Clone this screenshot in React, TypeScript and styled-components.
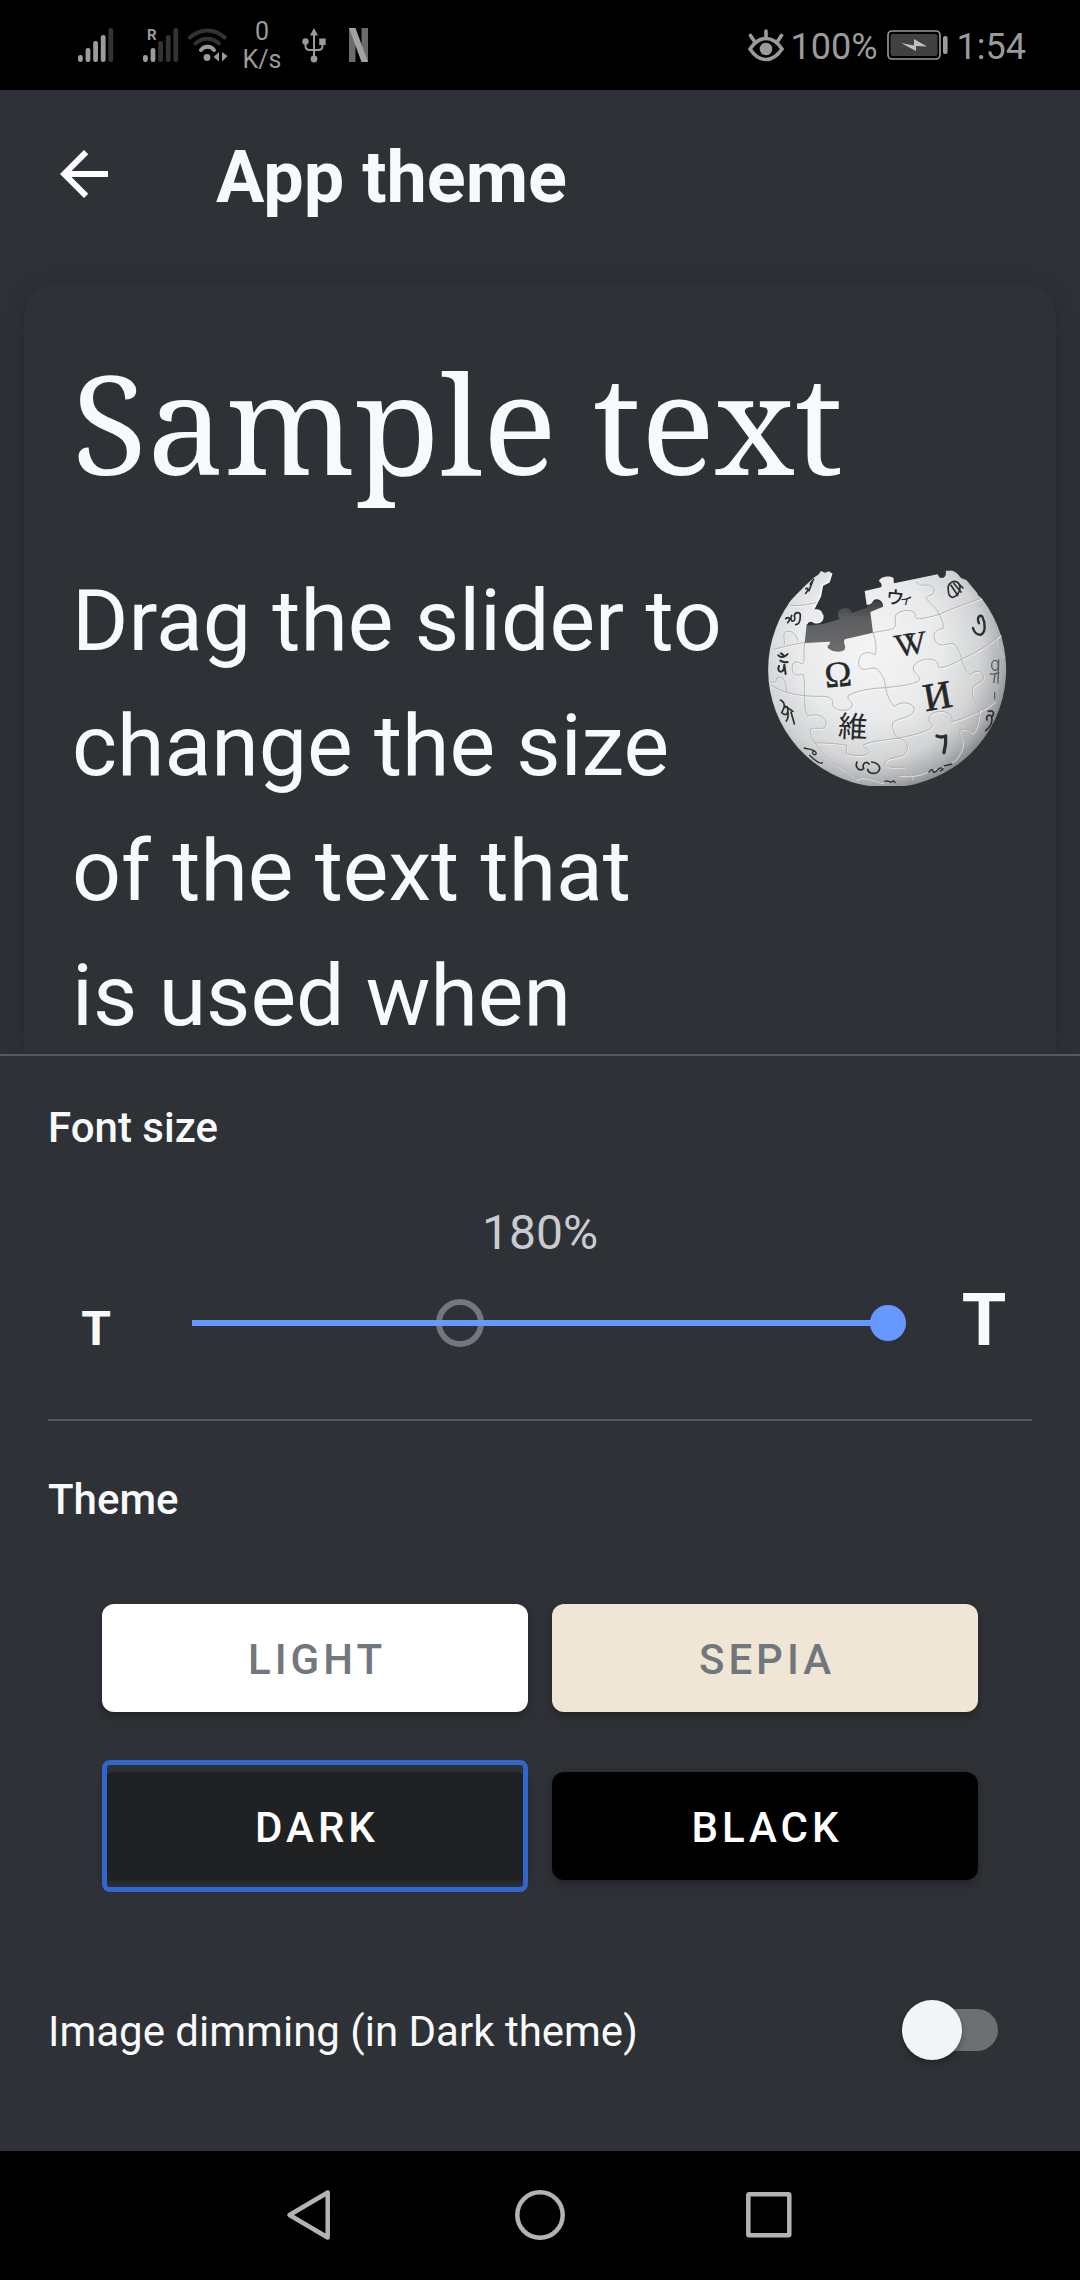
import React, { useState } from "react";
import styled, { createGlobalStyle, css } from "styled-components";

const color = {
  page: "#2e3136",
  text: "#f8f9fa",
  muted: "#c8ccd1",
  line: "#54595d",
  grey: "#72777d",
  blue: "#6699ff",
  selected: "#3366cc",
  status: "#9b9b9b",
  statusDim: "#333333",
};

const GlobalStyle = createGlobalStyle`
  *, *::before, *::after { box-sizing: border-box; }
  body { margin: 0; background: ${color.page}; }
  button { border: 0; margin: 0; padding: 0; background: none; font: inherit; color: inherit; }
`;

const Screen = styled.div`
  display: flex;
  flex-direction: column;
  height: 100vh;
  background: ${color.page};
  color: ${color.text};
  font-family: Roboto, "Noto Sans", sans-serif;
  > * { flex-shrink: 0; }
  svg { display: block; flex: none; }
`;

/* ---------- status bar ---------- */

const StatusBar = styled.header`
  display: flex;
  align-items: center;
  justify-content: space-between;
  height: 90px;
  padding: 0 54px 0 78px;
  background: #000;
  color: ${color.status};
`;

const StatusGroup = styled.div<{ $gap: number }>`
  display: flex;
  align-items: center;
  gap: ${(p) => p.$gap}px;
`;

const Speed = styled.div`
  width: 40px;
  padding-top: 2px;
  font-size: 25px;
  line-height: 28px;
  text-align: center;
  white-space: nowrap;
`;

const StatusText = styled.span`
  font-size: 36px;
  line-height: 42px;
  padding-top: 4px;
`;

function SignalIcon({ level, roaming }: { level: number; roaming?: boolean }) {
  return (
    <svg width="36" height="50" viewBox="0 -8 36 50" aria-hidden="true">
      {[7, 14, 21, 27, 34].map((h, i) => (
        <rect
          key={i}
          x={i * 7.6}
          y={34 - h}
          width="4.8"
          height={h}
          rx="2.2"
          fill={i < level ? color.status : color.statusDim}
        />
      ))}
      {roaming && (
        <text x="4" y="12" fontSize="15" fontWeight="700" fill={color.status} fontFamily="Roboto, sans-serif">
          R
        </text>
      )}
    </svg>
  );
}

function WifiIcon() {
  return (
    <svg width="40" height="34" viewBox="0 0 40 34" fill="none" strokeWidth="4" strokeLinecap="round" aria-hidden="true">
      <path d="M2 9.5C12 0 27 0 36.5 9.5" stroke={color.statusDim} />
      <path d="M7.5 15.5C15 9 24 9 31 15.5" stroke={color.statusDim} />
      <path d="M13 22C16 17.5 23 17.5 26 22" stroke={color.status} />
      <circle cx="19" cy="29.5" r="3.4" fill={color.status} />
      <path d="M31 24V33.5L25.5 29zM34 24V33.5L39.500 28z" fill={color.status} />
    </svg>
  );
}

function UsbIcon() {
  return (
    <svg width="24" height="35" viewBox="0 0 24 35" fill="none" stroke={color.status} strokeWidth="2" aria-hidden="true">
      <path d="M12 5V31M3.5 14V18Q3.5 22 8 22H16Q20.5 22 20.5 18V14" />
      <path d="M12 0L16 7.500H8z" fill={color.status} stroke="none" />
      <circle cx="3.5" cy="13.5" r="3.2" fill={color.status} stroke="none" />
      <rect x="17.2" y="10.5" width="6.5" height="6.5" fill={color.status} stroke="none" />
      <circle cx="12" cy="31" r="3.4" fill={color.status} stroke="none" />
    </svg>
  );
}

function StreamingLogo() {
  return (
    <svg width="19" height="34" viewBox="0 0 19 34" aria-hidden="true">
      <rect width="6.5" height="34" fill="#6b6b6b" />
      <rect x="12.5" width="6.5" height="34" fill="#6b6b6b" />
      <path d="M0 0H6.5L19 34H12.500z" fill="#a3a3a3" />
    </svg>
  );
}

function EyeIcon() {
  return (
    <svg width="36" height="33" viewBox="0 0 36 33" fill="none" stroke={color.status} strokeWidth="3.6" strokeLinecap="round" aria-hidden="true">
      <path d="M2 20Q9 9.5 18 9.5T34 20Q27 30.5 18 30.5T2 20z" />
      <circle cx="18" cy="20" r="6.3" fill={color.status} stroke="none" />
      <path d="M18 2V8M2.5 6.5L6.5 12.5M33.5 6.5L29.5 12.5" />
    </svg>
  );
}

function BatteryIcon() {
  return (
    <svg width="61" height="30" viewBox="0 0 61 30" aria-hidden="true">
      <rect x="1" y="1" width="52" height="28" rx="4" fill="none" stroke={color.status} strokeWidth="1.6" />
      <rect x="3.5" y="4" width="47" height="22" rx="2" fill="#414141" />
      <path d="M14 13L27 15.5V9L40 16.5L29 16L29 21z" fill="#c0c0c0" />
      <rect x="56" y="6" width="4.6" height="18" rx="2" fill={color.status} />
    </svg>
  );
}

/* ---------- toolbar ---------- */

const Toolbar = styled.div`
  display: flex;
  align-items: center;
  height: 168px;
  padding: 0 48px;
  gap: 96px;
`;

const BackButton = styled.button`
  display: block;
`;

const Title = styled.h1`
  margin: 0;
  padding-top: 8px;
  font-size: 72px;
  line-height: 84px;
  font-weight: 700;
`;

/* ---------- preview ---------- */

const Preview = styled.main`
  && {
    display: flex;
    flex: 1 1 0;
    min-height: 0;
    padding: 24px 24px 0;
    overflow: hidden;
  }
`;

const Card = styled.article`
  flex: 1;
  padding: 55px 48px 0;
  border-radius: 36px 36px 0 0;
  background: ${color.page};
  box-shadow: 0 6px 24px rgba(0, 0, 0, 0.22);
`;

const SampleTitle = styled.h2`
  margin: 0;
  font-family: "Noto Serif", "DejaVu Serif Condensed", "DejaVu Serif", serif;
  font-size: 138px;
  line-height: 168px;
  font-weight: 400;
  white-space: nowrap;
`;

const SampleBody = styled.div`
  display: flex;
  justify-content: space-between;
  margin-top: 53px;
`;

const SampleText = styled.p`
  margin: 0;
  font-size: 86px;
  line-height: 125px;
  white-space: nowrap;
`;

const GlobeFrame = styled.div`
  padding-top: 12px;
`;

function Globe() {
  const seams = [
    "M165 280C160 325 168 338 157 345C135 328 125 345 128 360C132 385 150 375 160 375C168 400 163 420 165 440C165 475 168 490 174 500C205 490 228 502 230 525C225 548 195 530 182 540C178 570 230 622 250 642C280 660 300 668 320 690",
    "M370 250C380 280 382 300 376 317C350 300 325 315 327 345C335 375 365 350 380 358C405 380 405 400 408 415C412 440 420 455 434 472C455 452 492 460 494 480C492 510 430 505 428 525C430 550 438 555 441 567C475 568 482 600 462 618C435 628 405 625 405 645C415 660 450 650 465 655C485 670 485 680 488 688",
    "M66 408C100 432 150 442 220 441C245 442 252 452 248 466C252 486 300 490 308 470C308 455 288 450 297 438C330 420 380 416 408 415C450 410 490 407 508 394C515 375 485 375 492 350C510 325 560 322 565 345C560 365 600 350 635 330C680 310 720 285 752 258",
    "M370 250C400 244 425 242 433 236C445 222 430 208 440 195C460 178 495 180 497 197C492 212 510 212 570 195C620 172 660 160 694 147",
    "M500 98C512 112 525 106 540 108C560 118 558 135 540 138C520 148 532 148 560 180C575 205 584 225 580 238C555 240 545 258 560 280C580 298 600 275 615 285C627 300 635 318 635 330C643 352 650 370 662 377C680 358 702 365 702 385C700 402 670 400 668 422C668 450 685 468 690 482",
    "M735 456C720 475 650 505 607 518C610 500 595 485 570 486C535 490 530 515 548 526C552 545 480 560 441 567C410 572 370 574 342 586C340 597 360 600 358 610C350 624 310 618 290 614L291 588C250 580 220 582 195 580",
    "M690 482C688 520 680 545 668 552C645 530 625 540 632 560C645 580 640 600 620 628C600 645 570 655 540 662C510 680 480 680 450 678",
    "M104 286C106 268 98 255 108 248C125 240 140 255 145 275M72 300C90 296 130 284 165 280",
    "M64 398C85 405 78 388 84 384C105 380 108 402 112 428M118 167C140 172 180 165 200 160",
    "M752 258C725 265 745 290 760 322M320 690C345 675 370 694 400 700",
  ];
  return (
    <svg width="240" height="216" viewBox="55 62 720 648" role="img" aria-label="Wikipedia globe">
      <defs>
        <radialGradient id="ball" gradientUnits="userSpaceOnUse" cx="360" cy="300" r="430">
          <stop offset="0" stopColor="#f5f5f6" />
          <stop offset="0.5" stopColor="#e9eaeb" />
          <stop offset="0.78" stopColor="#d2d3d4" />
          <stop offset="0.93" stopColor="#adaeb0" />
          <stop offset="1" stopColor="#8c8e90" />
        </radialGradient>
        <linearGradient id="hollow" x1="0" y1="0" x2="0" y2="1">
          <stop offset="0" stopColor="#3f4042" />
          <stop offset="0.35" stopColor="#5d5e60" />
          <stop offset="1" stopColor="#6c6d6f" />
        </linearGradient>
      </defs>
      <path
        d="M165 230L220 224L270 210C258 190 270 176 288 176C304 178 306 186 306 191L350 176C370 150 395 150 402 168L380 255L285 275C295 300 280 312 262 312C240 312 228 298 238 282L160 284z"
        fill="url(#hollow)"
      />
      <path
        d="M246 72L238 66L226 70L214 65L206 76C190 84 160 115 134 142C114 160 114 172 106 180A357 353 0 1 0 697 148C690 140 685 140 682 130L650 92L634 86C625 72 610 62 600 64L588 64C592 82 580 90 569 84L564 75L433 102C430 92 436 86 426 83C408 78 388 86 388 96C396 102 398 108 394 114L345 125L351 166C370 168 366 154 378 150C392 148 402 160 400 172L362 188L370 250L285 270C278 282 292 290 284 302C270 312 240 306 234 294C232 285 245 286 240 277L165 281L171 225C175 212 185 214 195 220C215 224 222 210 219 196C218 182 204 178 191 181L212 140L218 108L238 98z"
        fill="url(#ball)"
      />
      <path d="M246 72L238 98L218 108L212 140L191 181" fill="none" stroke="#fafafa" strokeWidth="5" />
      <path d="M171 225C175 212 185 214 195 220C215 224 222 210 219 196" fill="none" stroke="#fafafa" strokeWidth="4" />
      <g fill="none" strokeLinecap="round">
        {seams.map((d) => (
          <path key={d} d={d} transform="translate(2 3)" stroke="#fbfbfb" strokeWidth="2" />
        ))}
        {seams.map((d) => (
          <path key={d} d={d} stroke="#a9abad" strokeWidth="2.5" />
        ))}
      </g>
      <g fill="#262728" fontFamily='"Liberation Serif", "Noto Sans CJK JP", serif' textAnchor="middle">
        <text transform="translate(268 412) rotate(-5)" fontSize="110" stroke="#262728" strokeWidth="1">Ω</text>
        <text transform="translate(472 318) rotate(-8)" fontSize="96" stroke="#262728" strokeWidth="1">V</text>
        <text transform="translate(502 313) rotate(-8)" fontSize="96" stroke="#262728" strokeWidth="1">V</text>
        <text transform="translate(570 478) rotate(-10)" fontSize="118" stroke="#262728" strokeWidth="2">И</text>
        <text transform="translate(308 564) rotate(3)" fontSize="88" fontFamily='"Noto Sans CJK JP", sans-serif'>維</text>
        <text transform="translate(434 164) rotate(6)" fontSize="54" fontFamily='"Noto Sans CJK JP", sans-serif' fontWeight="500">ウ</text>
        <text transform="translate(468 164) rotate(14)" fontSize="42" fontFamily='"Noto Sans CJK JP", sans-serif'>ィ</text>
      </g>
      <g fill="none" stroke="#5a5b5d" strokeWidth="4" strokeLinecap="round">
        <ellipse cx="736" cy="348" rx="10" ry="15" />
        <path d="M722 374Q735 376 748 370M736 376L732 400M747 332L745 402M735 430V448" />
      </g>
      <g fill="none" stroke="#2c2d2e" strokeWidth="6" strokeLinecap="round" strokeLinejoin="round">
        <path d="M562 560Q575 566 588 560Q590 585 583 610" strokeWidth="10" />
        <path d="M688 222C680 205 690 194 698 202C710 225 706 250 694 256C680 258 672 245 670 236" strokeWidth="7" />
        <path d="M596 122C592 105 608 92 622 98C640 110 628 140 608 144C598 142 596 132 596 122M604 108L624 138M612 102L634 128M622 98L640 116" strokeWidth="5" />
        <path d="M86 318C95 328 110 320 114 314M92 334Q100 340 114 338M88 350C80 368 98 372 102 360L104 346M104 346L108 374M94 312L102 318" />
        <path d="M92 452C112 462 102 480 96 490C112 505 118 488 112 472M106 470L130 486M114 480Q118 505 110 515M124 488Q130 508 134 524" strokeWidth="5" />
        <path d="M108 208C122 198 122 214 114 220M126 198C116 222 142 220 134 200C136 186 152 188 152 198C152 216 146 226 138 226" strokeWidth="5" />
        <path d="M168 132C178 122 176 114 168 118M178 124L190 92M192 90L182 104" strokeWidth="5" />
        <path d="M164 596C175 600 196 598 200 612C196 622 186 612 190 606M180 618C196 634 210 646 218 640" strokeWidth="4" />
        <path d="M322 638C314 655 330 668 342 658C336 642 350 634 358 644M366 638C392 642 396 660 382 670C366 676 354 668 354 660" strokeWidth="5" />
        <path d="M406 696C414 690 420 702 428 697Q434 692 436 700" strokeWidth="4" />
        <path d="M538 668C545 658 552 660 550 668C560 674 562 656 572 656C584 654 580 664 572 664M584 650L606 644" strokeWidth="4" />
        <path d="M716 486C732 480 736 494 726 502C718 492 708 500 712 512M726 502C730 516 722 532 708 544" strokeWidth="5" />
      </g>
    </svg>
  );
}

/* ---------- settings ---------- */

const Settings = styled.section`
  display: flex;
  flex-direction: column;
  padding: 48px 48px 49px;
  border-top: 2px solid ${color.line};
`;

const SectionTitle = styled.h3`
  margin: 0;
  font-size: 42px;
  line-height: 48px;
  font-weight: 500;
`;

const Percent = styled.output`
  display: block;
  margin-top: 53px;
  font-size: 48px;
  line-height: 56px;
  text-align: center;
  color: ${color.muted};
`;

const SizeRow = styled.div`
  display: flex;
  align-items: baseline;
  height: 88px;
  margin-top: 18px;
`;

const SizeButton = styled.button<{ $large?: boolean }>`
  && {
    width: 96px;
    font-size: ${(p) => (p.$large ? 72 : 48)}px;
    line-height: ${(p) => (p.$large ? 84 : 56)}px;
    font-weight: 700;
    text-align: center;
  }
`;

const SliderBox = styled.div`
  position: relative;
  flex: 1;
  align-self: stretch;
  display: flex;
  align-items: center;
  padding: 0 30px;
`;

const DefaultMark = styled.span`
  position: absolute;
  top: 20px;
  left: calc(48px + (100% - 96px) * 5 / 13 - 24px);
  width: 48px;
  height: 48px;
  border: 6px solid ${color.grey};
  border-radius: 50%;
`;

const thumb = css`
  appearance: none;
  width: 36px;
  height: 36px;
  border: 0;
  border-radius: 50%;
  background: ${color.blue};
`;

const Slider = styled.input<{ $fill: number }>`
  position: relative;
  appearance: none;
  flex: 1;
  width: 100%;
  height: 36px;
  margin: 0;
  background: linear-gradient(
      to right,
      ${color.blue} ${(p) => p.$fill}%,
      ${color.grey} ${(p) => p.$fill}%
    )
    center / calc(100% - 36px) 6px no-repeat;
  &::-webkit-slider-thumb { ${thumb} }
  &::-moz-range-thumb { ${thumb} }
`;

const Divider = styled.hr`
  width: 100%;
  height: 2px;
  margin: 52px 0 55px;
  border: 0;
  background: ${color.line};
`;

const ThemeGrid = styled.div`
  display: grid;
  grid-template-columns: 1fr 1fr;
  gap: 36px 24px;
  margin: 68px 54px 0;
`;

const ThemeButton = styled.button<{ $bg: string; $fg: string }>`
  position: relative;
  && {
    padding: 12px 0;
    color: ${(p) => p.$fg};
  }
  &[aria-pressed="true"]::after {
    content: "";
    position: absolute;
    inset: 0;
    border: 5px solid ${color.selected};
    border-radius: 8px;
  }
  > span {
    display: block;
    padding-top: 4px;
    border-radius: 12px;
    background: ${(p) => p.$bg};
    box-shadow: 0 4px 8px rgba(0, 0, 0, 0.28);
    font-size: 42px;
    line-height: 104px;
    font-weight: 500;
    letter-spacing: 4px;
    text-indent: 4px;
    text-transform: uppercase;
  }
`;

const SwitchRow = styled.label`
  display: flex;
  align-items: center;
  justify-content: space-between;
  height: 144px;
  margin-top: 66px;
  padding-right: 34px;
  font-size: 42px;
  line-height: 48px;
`;

const SwitchLabel = styled.span`
  padding-top: 4px;
`;

const Switch = styled.input`
  appearance: none;
  display: grid;
  align-items: center;
  width: 96px;
  height: 60px;
  margin: 0;
  &::before,
  &::after {
    content: "";
    grid-area: 1 / 1;
  }
  &::before {
    height: 42px;
    margin-left: 9px;
    border-radius: 21px;
    background: #6d6f73;
  }
  &::after {
    width: 60px;
    height: 60px;
    border-radius: 50%;
    background: #f3f4f8;
    box-shadow: 0 3px 6px rgba(0, 0, 0, 0.3);
  }
  &:checked::before { background: ${color.selected}; }
  &:checked::after { justify-self: end; }
`;

/* ---------- navigation bar ---------- */

const NavBar = styled.nav`
  display: flex;
  align-items: center;
  justify-content: center;
  gap: 178px;
  height: 129px;
  background: #000;
`;

const NavButton = styled.button`
  display: block;
`;

const navShapes: Record<string, React.ReactNode> = {
  Back: <path d="M43.7 4.5V49.5L5.5 27z" />,
  Home: <circle cx="26" cy="27" r="22.7" />,
  Recent: <rect x="4.3" y="6.3" width="41" height="41" rx="1" />,
};

const themes = [
  { name: "Light", bg: "#ffffff", fg: "#72777d" },
  { name: "Sepia", bg: "#efe6d5", fg: "#72777d" },
  { name: "Dark", bg: "#202122", fg: "#ffffff" },
  { name: "Black", bg: "#000000", fg: "#ffffff" },
];

const MIN = -5;
const MAX = 8;

export default function App() {
  const [size, setSize] = useState(MAX);
  const [theme, setTheme] = useState("Dark");
  const [dimming, setDimming] = useState(false);
  const clamp = (n: number) => Math.max(MIN, Math.min(MAX, n));

  return (
    <Screen>
      <GlobalStyle />
      <StatusBar>
        <StatusGroup $gap={20}>
          <StatusGroup $gap={14}>
            <StatusGroup $gap={29}>
              <SignalIcon level={4} />
              <StatusGroup $gap={9}>
                <SignalIcon level={2} roaming />
                <WifiIcon />
              </StatusGroup>
            </StatusGroup>
            <Speed>0<br />K/s</Speed>
          </StatusGroup>
          <StatusGroup $gap={23}>
            <UsbIcon />
            <StreamingLogo />
          </StatusGroup>
        </StatusGroup>
        <StatusGroup $gap={9}>
          <StatusGroup $gap={7}>
            <EyeIcon />
            <StatusText>100%</StatusText>
          </StatusGroup>
          <BatteryIcon />
          <StatusText>1:54</StatusText>
        </StatusGroup>
      </StatusBar>

      <Toolbar>
        <BackButton type="button" aria-label="Back">
          <svg width="72" height="72" viewBox="0 0 24 24" fill="#fff">
            <path d="M20 11H7.83l5.59-5.59L12 4l-8 8 8 8 1.41-1.41L7.83 13H20v-2z" />
          </svg>
        </BackButton>
        <Title>App theme</Title>
      </Toolbar>

      <Preview>
        <Card>
          <SampleTitle>Sample text</SampleTitle>
          <SampleBody>
            <SampleText>
              Drag the slider to<br />
              change the size<br />
              of the text that<br />
              is used when
            </SampleText>
            <GlobeFrame>
              <Globe />
            </GlobeFrame>
          </SampleBody>
        </Card>
      </Preview>

      <Settings>
        <SectionTitle id="font-size">Font size</SectionTitle>
        <Percent>{100 + size * 10}%</Percent>
        <SizeRow>
          <SizeButton type="button" aria-label="T, smaller text" onClick={() => setSize(clamp(size - 1))}>T</SizeButton>
          <SliderBox>
            <DefaultMark />
            <Slider
              type="range"
              min={MIN}
              max={MAX}
              value={size}
              $fill={((size - MIN) / (MAX - MIN)) * 100}
              aria-labelledby="font-size"
              onChange={(e) => setSize(Number(e.target.value))}
            />
          </SliderBox>
          <SizeButton type="button" $large aria-label="T, larger text" onClick={() => setSize(clamp(size + 1))}>T</SizeButton>
        </SizeRow>
        <Divider />
        <SectionTitle>Theme</SectionTitle>
        <ThemeGrid>
          {themes.map((t) => (
            <ThemeButton
              key={t.name}
              type="button"
              $bg={t.bg}
              $fg={t.fg}
              aria-pressed={theme === t.name}
              onClick={() => setTheme(t.name)}
            >
              <span>{t.name}</span>
            </ThemeButton>
          ))}
        </ThemeGrid>
        <SwitchRow>
          <SwitchLabel>Image dimming (in Dark theme)</SwitchLabel>
          <Switch type="checkbox" role="switch" checked={dimming} onChange={(e) => setDimming(e.target.checked)} />
        </SwitchRow>
      </Settings>

      <NavBar>
        {Object.entries(navShapes).map(([name, shape]) => (
          <NavButton key={name} type="button" aria-label={name}>
            <svg width="52" height="55" viewBox="0 0 52 55" fill="none" stroke="#b3b3b3" strokeWidth="4.5" strokeLinejoin="round">
              {shape}
            </svg>
          </NavButton>
        ))}
      </NavBar>
    </Screen>
  );
}
